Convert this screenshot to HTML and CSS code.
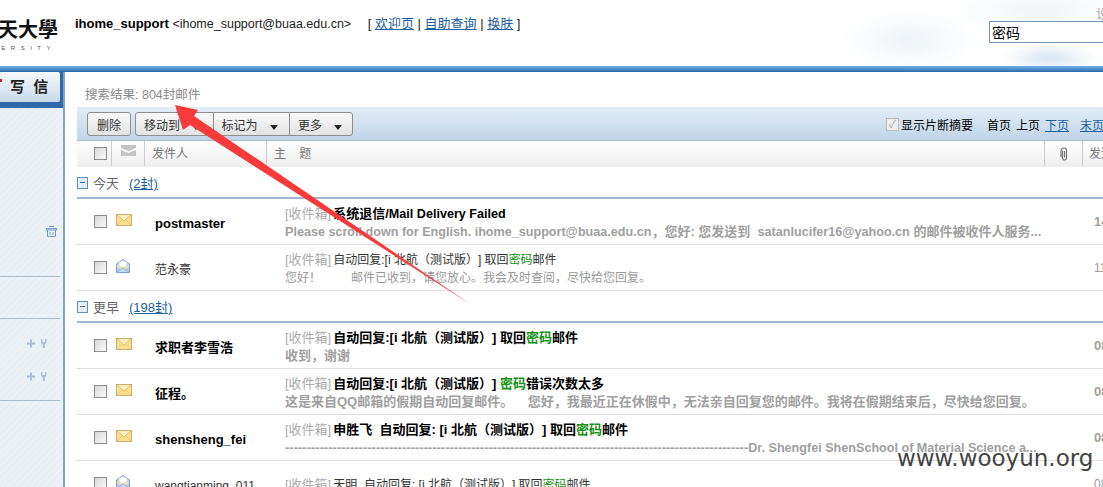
FILE: index.html
```html
<!DOCTYPE html>
<html>
<head>
  <title>搜索结果</title>
  <link rel="stylesheet" href="styles.css">
</head>
<body>
  <svg class="icon-defs" width="0" height="0">
    <symbol id="mail-new" viewBox="0 0 16 12">
      <rect x="0.5" y="0.5" width="15" height="11" fill="#fbe08f" stroke="#c9ad69"/>
      <path d="M1 1 L8 7 L15 1" fill="#fff0bd" stroke="#d8bb72"/>
      <path d="M1 11 L6 6 M15 11 L10 6" fill="none" stroke="#e6cb85"/>
    </symbol>
    <symbol id="mail-read" viewBox="0 0 14 14">
      <path d="M7 0.5 L13.5 5 V13.5 H0.5 V5 Z" fill="#b4cff2" stroke="#7f9fd0"/>
      <path d="M3 6 V3.5 L7 1.5 L11 3.5 V6 L7 9 Z" fill="#fff"/>
      <path d="M1 6 L7 9.5 L13 6 V8 L7 11 L1 8 Z" fill="#ffe593"/>
      <path d="M1 13 L7 9 L13 13" fill="#c8dcf5" stroke="#8fadd8"/>
    </symbol>
    <symbol id="plus-fork" viewBox="0 0 21 9">
      <path d="M0 3.500 H8 V5.500 H0 Z M3 0.500 H5 V8.500 H3 Z" fill="#a9bdd8"/>
      <path d="M14 0 H15.500 V3 H18 V0 H19.500 V4 L17.800 5.500 V9 H15.800 V5.500 L14 4 Z" fill="#a9bdd8"/>
    </symbol>
  </svg>

  <div class="page">
    <header class="top">
      <div class="logo">
        <div class="logo-cn">天大學</div>
        <div class="logo-en">ERSITY</div>
      </div>
      <div class="user">
        <b>ihome_support</b> &lt;ihome_support@buaa.edu.cn&gt;
        <span class="user-links">[ <a href="#">欢迎页</a> | <a href="#">自助查询</a> | <a href="#">换肤</a> ]</span>
      </div>
      <div class="search">
        <div class="search-set">设</div>
        <input class="search-box" type="text" value="密码">
      </div>
    </header>
    <div class="top-bar"></div>

    <div class="main">
      <aside class="side">
        <div class="write-strip">
          <div class="write-btn"><i class="write-dot"></i>写 信</div>
        </div>
        <div class="side-block trash-block">
          <svg class="trash" width="11" height="12" viewBox="0 0 11 12">
            <path d="M3 1.500 H8 M0.500 3.500 H10.500 V5 H0.500 Z M1.500 5 V11.500 H9.500 V5 M4 7 V10 M7 7 V10" fill="none" stroke="#6f9bc4"/>
          </svg>
        </div>
        <div class="side-block folder-block"></div>
        <div class="side-block tools-block">
          <svg width="21" height="9"><use href="#plus-fork"/></svg>
          <svg width="21" height="9"><use href="#plus-fork"/></svg>
        </div>
      </aside>

      <section class="content">
        <div class="result">搜索结果: 804封邮件</div>

        <div class="toolbar">
          <button class="btn">删除</button>
          <div class="btn-group">
            <button class="btn-part">移动到<i class="caret"></i></button>
            <button class="btn-part">标记为<i class="caret"></i></button>
            <button class="btn-part">更多<i class="caret"></i></button>
          </div>
          <div class="toolbar-right">
            <label class="digest"><i class="digest-check">✓</i>显示片断摘要</label>
            <span class="pager">首页</span>
            <span class="pager">上页</span>
            <a class="pager" href="#">下页</a>
            <a class="pager pager-last" href="#">末页</a>
          </div>
        </div>

        <div class="list-head">
          <div class="col-check"><i class="check"></i></div>
          <div class="col-mail">
            <svg width="15" height="11" viewBox="0 0 15 11"><path d="M0 0 H15 V3 L7.500 6 L0 3 Z M0 5 L7.500 8 L15 5 V11 H0 Z" fill="#c4c4c4"/></svg>
          </div>
          <div class="col-from">发件人</div>
          <div class="col-subject">主&nbsp;&nbsp;&nbsp;&nbsp;题</div>
          <div class="col-clip">
            <svg width="9" height="14" viewBox="0 0 9 14"><path d="M2.500 3.500 V10.500 Q2.500 13 4.500 13 Q6.500 13 6.500 10.500 V3.500 Q6.500 1 4.500 1 Q1 1 1 4 V10 M4.500 4 V10.500" fill="none" stroke="#777" stroke-width="1.200"/></svg>
          </div>
          <div class="col-date">发送</div>
        </div>

        <div class="group">
          <i class="fold"></i>今天<a class="group-count" href="#">(2封)</a>
        </div>

        <div class="row unread">
          <i class="check"></i>
          <svg class="mail" width="16" height="12"><use href="#mail-new"/></svg>
          <div class="from">postmaster</div>
          <div class="text">
            <div class="subject"><span class="box">[收件箱]</span>系统退信/<span class="latin">Mail Delivery Failed</span></div>
            <div class="brief"><span class="latin">Please scroll down for English. ihome_support@buaa.edu.cn</span>，您好: 您发送到&nbsp; <span class="latin">satanlucifer16@yahoo.cn</span> 的邮件被收件人服务...</div>
          </div>
          <div class="date">14:02</div>
        </div>
        <div class="row">
          <i class="check"></i>
          <svg class="mail mail-open" width="14" height="14"><use href="#mail-read"/></svg>
          <div class="from">范永豪</div>
          <div class="text">
            <div class="subject"><span class="box">[收件箱]</span>自动回复:[i 北航（测试版）] 取回<em>密码</em>邮件</div>
            <div class="brief">您好！&nbsp;&nbsp;&nbsp;&nbsp;&nbsp;&nbsp;&nbsp;&nbsp; 邮件已收到，请您放心。我会及时查阅，尽快给您回复。</div>
          </div>
          <div class="date">11:20</div>
        </div>

        <div class="group">
          <i class="fold"></i>更早<a class="group-count" href="#">(198封)</a>
        </div>

        <div class="row unread">
          <i class="check"></i>
          <svg class="mail" width="16" height="12"><use href="#mail-new"/></svg>
          <div class="from">求职者李雪浩</div>
          <div class="text">
            <div class="subject"><span class="box">[收件箱]</span>自动回复:[i 北航（测试版）] 取回<em>密码</em>邮件</div>
            <div class="brief">收到，谢谢</div>
          </div>
          <div class="date">08:15</div>
        </div>
        <div class="row unread">
          <i class="check"></i>
          <svg class="mail" width="16" height="12"><use href="#mail-new"/></svg>
          <div class="from">征程。</div>
          <div class="text">
            <div class="subject"><span class="box">[收件箱]</span>自动回复:[i 北航（测试版）] <em>密码</em>错误次数太多</div>
            <div class="brief">这是来自QQ邮箱的假期自动回复邮件。&nbsp;&nbsp;&nbsp; 您好，我最近正在休假中，无法亲自回复您的邮件。我将在假期结束后，尽快给您回复。</div>
          </div>
          <div class="date">08:10</div>
        </div>
        <div class="row unread">
          <i class="check"></i>
          <svg class="mail" width="16" height="12"><use href="#mail-new"/></svg>
          <div class="from">shensheng_fei</div>
          <div class="text">
            <div class="subject"><span class="box">[收件箱]</span>申胜飞&nbsp; 自动回复: [i 北航（测试版）] 取回<em>密码</em>邮件</div>
            <div class="brief">-----------------------------------------------------------------------------------------------------------<span class="latin">Dr. Shengfei ShenSchool of Material Science a...</span></div>
          </div>
          <div class="date">08:02</div>
        </div>
        <div class="row">
          <i class="check"></i>
          <svg class="mail mail-open" width="14" height="14"><use href="#mail-read"/></svg>
          <div class="from">wangtianming_011</div>
          <div class="text">
            <div class="subject"><span class="box">[收件箱]</span>天明&nbsp; 自动回复: [i 北航（测试版）] 取回<em>密码</em>邮件</div>
          </div>
          <div class="date">08:00</div>
        </div>
      </section>
    </div>

    <!-- annotation drawn over the screenshot -->
    <svg class="arrow" width="1103" height="487" viewBox="0 0 1103 487">
      <polygon points="175,105 198,110 194,116 470,304 190,125 183,130" fill="#f93a3a"/>
    </svg>
    <div class="watermark">www.wooyun.org</div>
  </div>
</body>
</html>
```

FILE: styles.css
```css
* {
  box-sizing: border-box;
}

html, body {
  margin: 0;
  padding: 0;
}

body {
  font-family: "Liberation Sans", "Noto Sans CJK SC", sans-serif;
  font-size: 13px;
  color: #000;
  background: #fff;
  text-spacing-trim: space-all;
}

a {
  color: #1a5f9e;
}

i {
  font-style: normal;
}

.icon-defs {
  display: block;
  height: 0;
}

.page {
  position: relative;
  width: 1103px;
  height: 487px;
  overflow: hidden;
}

/* header */
.top {
  display: flex;
  height: 66px;
  background:
    radial-gradient(ellipse 50px 16px at 1050px 58px, #dbe7f1, transparent),
    radial-gradient(ellipse 70px 30px at 910px 40px, #eef3f7, transparent),
    radial-gradient(ellipse 90px 25px at 1040px 10px, #f0f4f7, transparent),
    #fff;
}

.logo {
  width: 60px;
  padding-top: 17px;
  overflow: hidden;
  flex-shrink: 0;
}

.logo-cn {
  display: flex;
  justify-content: flex-end;
  font-family: "Liberation Serif", "Noto Sans CJK TC", serif;
  font-size: 20px;
  font-weight: bold;
  line-height: 26px;
  white-space: nowrap;
  color: #111;
  margin-right: 2px;
}

.logo-en {
  margin-top: 1px;
  padding-right: 4px;
  font-size: 6px;
  line-height: 8px;
  letter-spacing: 5.500px;
  text-align: right;
  color: #555;
}

.user {
  margin-left: 15px;
  padding-top: 15px;
  font-size: 12.500px;
  line-height: 17px;
  color: #222;
  white-space: nowrap;
}

.user b {
  font-size: 13px;
  color: #000;
}

.user-links {
  margin-left: 13px;
  font-size: 13px;
}

.search {
  margin-left: auto;
  width: 114px;
  flex-shrink: 0;
}

.search-set {
  padding: 7px 0 0 107px;
  line-height: 14px;
  color: #aaa;
  white-space: nowrap;
}

.search-box {
  display: block;
  width: 130px;
  height: 22px;
  padding: 0 2px;
  border: 1px solid #7496b2;
  font: 14px "Noto Sans CJK SC", sans-serif;
  color: #000;
  background: #fff;
}

.top-bar {
  height: 6px;
  background: linear-gradient(#79b0de, #4d90cf 50%, #2d6aa8);
}

.main {
  display: flex;
  height: 415px;
}

/* left column */
.side {
  width: 65px;
  flex-shrink: 0;
  border-right: 2px solid #7ea3c4;
  background: repeating-linear-gradient(135deg, #e8eff5 0, #e8eff5 3px, #edf2f7 3px, #edf2f7 5px);
}

.write-strip {
  height: 36px;
  padding-right: 3px;
  background: #2f6bab;
}

.write-btn {
  position: relative;
  height: 30px;
  width: 60px;
  border-radius: 0 2px 2px 0;
  background: linear-gradient(#f7fafc, #c7d9ea);
  font-size: 15px;
  font-weight: bold;
  word-spacing: 4px;
  line-height: 30px;
  padding-left: 10px;
  color: #222;
}

.write-dot {
  position: absolute;
  left: 0;
  top: 7px;
  width: 2px;
  height: 3px;
  background: #c22;
}

.side-block {
  width: 60px;
  border-bottom: 1px solid #a9bccd;
}

.trash-block {
  height: 169px;
  padding: 117px 0 0 46px;
}

.trash {
  display: block;
}

.folder-block {
  height: 42px;
}

.tools-block {
  display: flex;
  flex-direction: column;
  align-items: flex-end;
  height: 82px;
  padding: 20px 12px 0 0;
  gap: 24px;
}

/* right column */
.content {
  flex: 1;
  min-width: 0;
  padding-left: 12px;
}

.result {
  height: 35px;
  padding: 15px 0 0 8px;
  font-size: 12.500px;
  line-height: 16px;
  color: #888;
}

.toolbar {
  display: flex;
  align-items: center;
  height: 34px;
  padding: 1px 0 0 10px;
  font-size: 12px;
  background: linear-gradient(#e3edf5, #bfd5e8);
  border-bottom: 1px solid #a5bccd;
}

.btn, .btn-group {
  height: 24px;
  border: 1px solid #8f8f8f;
  border-radius: 3px;
  background: linear-gradient(#fafafa, #e2e2e2);
}

.btn {
  width: 44px;
  padding: 0;
  font: inherit;
  color: #333;
}

.btn-group {
  display: flex;
  margin-left: 4px;
  width: 218px;
}

.btn-part {
  flex: 0 0 auto;
  width: 76.500px;
  height: 100%;
  padding: 0 0 0 8px;
  border: 0;
  border-left: 1px solid #8f8f8f;
  background: none;
  font: inherit;
  color: #333;
  text-align: left;
}

.btn-part:first-child {
  border-left: 0;
}

.btn-part:last-child {
  width: 64px;
}

.caret {
  display: inline-block;
  margin-left: 12px;
  border-top: 5px solid #222;
  border-left: 4px solid transparent;
  border-right: 4px solid transparent;
  vertical-align: 0;
}

.toolbar-right {
  display: flex;
  align-items: center;
  margin-left: auto;
  white-space: nowrap;
  width: 217px;
  flex-shrink: 0;
}

.digest {
  display: flex;
  align-items: center;
  margin-right: 14px;
}

.digest-check {
  width: 13px;
  height: 13px;
  margin-right: 2px;
  border: 1px solid #bbb;
  background: #eee;
  color: #aaa;
  font-size: 11px;
  line-height: 11px;
  text-align: center;
}

.pager {
  margin-right: 5px;
}

.pager-last {
  margin-left: 6px;
}

.list-head {
  display: flex;
  align-items: stretch;
  height: 26px;
  background: linear-gradient(#fff, #eee);
  font-size: 12px;
  color: #777;
  line-height: 26px;
}

.list-head > div {
  flex-shrink: 0;
  border-right: 1px solid #ccc;
  margin-bottom: 1px;
}

.col-check {
  display: flex;
  align-items: center;
  width: 35px;
  padding-left: 17px;
}

.col-mail {
  width: 33px;
  padding: 4px 0 0 9px;
  line-height: 0;
}

.col-from {
  width: 122px;
  padding-left: 7px;
}

.col-subject {
  width: 778px;
  padding-left: 7px;
}

.col-clip {
  width: 38px;
  padding: 6px 0 0 15px;
  line-height: 0;
}

.list-head .col-date {
  border-right: 0;
  padding-left: 6px;
  white-space: nowrap;
}

.check {
  display: block;
  width: 13px;
  height: 13px;
  flex-shrink: 0;
  border: 1px solid #8c8c8c;
  background: linear-gradient(135deg, #d8d8d8, #fafafa);
}

.group {
  display: flex;
  align-items: center;
  height: 32px;
  padding-top: 1px;
  border-bottom: 2px solid #9fb8cf;
  color: #666;
}

.fold {
  position: relative;
  width: 11px;
  height: 12px;
  margin-right: 5px;
  border: 1px solid #5f90bf;
  background: #e6eef6;
}

.fold::after {
  content: "";
  position: absolute;
  left: 2px;
  top: 4px;
  width: 5px;
  height: 1px;
  background: #3a6a9a;
}

.group-count {
  margin-left: 10px;
}

.row {
  display: flex;
  align-items: center;
  height: 46px;
  padding-left: 17px;
  border-bottom: 1px solid #ddd;
  font-size: 12px;
  color: #333;
  white-space: nowrap;
}

.mail {
  margin: -3px 0 0 9px;
  flex-shrink: 0;
}

.mail-open {
  margin-right: 2px;
}

.from {
  margin-left: 23px;
  padding-top: 4px;
  width: 130px;
  flex-shrink: 0;
  line-height: 16px;
}

.text {
  width: 809px;
  flex-shrink: 0;
  padding-top: 2px;
  line-height: 18px;
}

.subject {
  height: 18px;
}

.box {
  margin-right: 2px;
  font-size: 13px;
  color: #aaa;
  font-weight: normal;
}

.subject em {
  font-style: normal;
  color: #129212;
}

.brief {
  height: 18px;
  color: #999;
}

.date {
  color: #999;
}

.unread {
  font-size: 13px;
}

.unread .from, .unread .subject {
  font-weight: bold;
  color: #000;
}

.unread .subject em {
  color: #129212;
}

.unread .brief, .unread .date {
  font-weight: bold;
  color: #a0a0a0;
}

.latin {
  font-size: 12.600px;
}

/* overlays */
.arrow {
  position: absolute;
  left: 0;
  top: 0;
}

.watermark {
  position: absolute;
  left: 897px;
  top: 443px;
  font-family: "DejaVu Sans", sans-serif;
  font-size: 23px;
  line-height: 30px;
  color: #444;
  white-space: nowrap;
}
```
